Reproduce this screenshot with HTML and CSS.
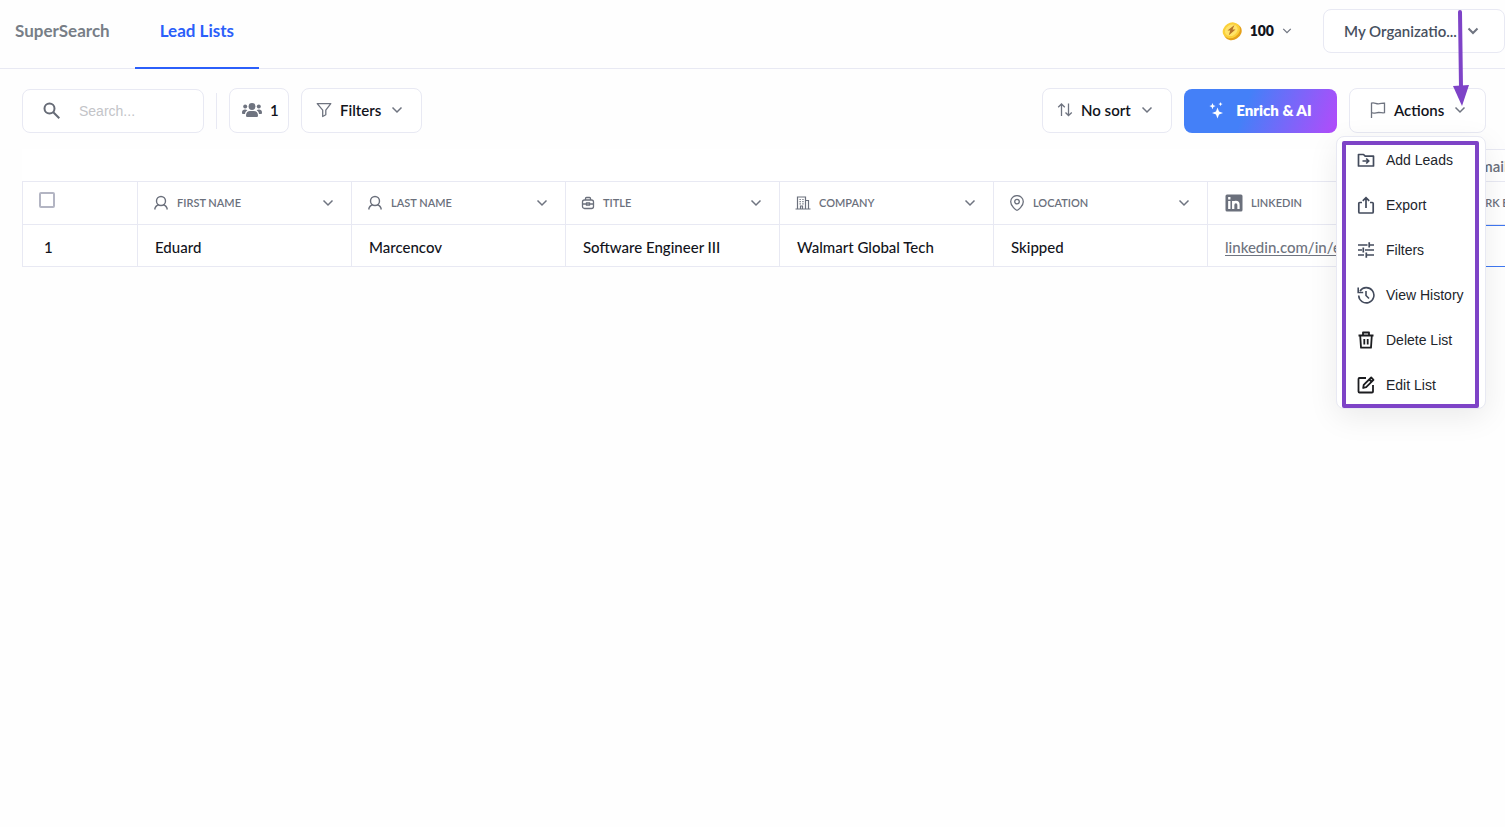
FILE: index.html
```html
<!DOCTYPE html>
<html lang="en">
<head>
  <meta charset="UTF-8">
  <meta name="viewport" content="width=device-width, initial-scale=1">
  <title>Lead Lists</title>
  <link rel="stylesheet" href="styles.css">
</head>
<body>

<!-- Shared icons -->
<svg class="sprite" aria-hidden="true">
  <symbol id="chevron" viewBox="0 0 12 12"><path d="M1.500 3.500 6 8l4.500-4.500" fill="none" stroke="currentColor"/></symbol>
  <symbol id="person" viewBox="0 0 16 16"><g fill="none" stroke="currentColor" stroke-width="1.400"><circle cx="8" cy="6" r="4.500"/><path d="M1.700 14.500c.5-2.700 2-4.200 4-4.700M14.300 14.500c-.5-2.700-2-4.200-4-4.700"/></g></symbol>
</svg>

<header class="topbar">
  <nav class="tabs">
    <a class="tab" href="#">SuperSearch</a>
    <a class="tab active" href="#">Lead Lists</a>
  </nav>
  <div class="account">
    <button class="credits" type="button">
      <svg class="coin" viewBox="0 0 20 20">
        <ellipse cx="10.800" cy="11" rx="9.300" ry="7.800" transform="rotate(-32 10.800 11)" fill="#e5a11b"/>
        <ellipse cx="9.300" cy="9.300" rx="9" ry="7.500" transform="rotate(-32 9.300 9.300)" fill="#fbd03a"/>
        <ellipse cx="9.300" cy="9.300" rx="6.700" ry="5.400" transform="rotate(-32 9.300 9.300)" fill="#ffe36b"/>
        <path d="M12.500 4 5.500 9.500h2.700L6.800 14.300l6.700-5.800h-3z" fill="#b5722a"/>
      </svg>
      <span>100</span>
      <svg class="chevron"><use href="#chevron"/></svg>
    </button>
    <button class="org" type="button">
      <span>My Organizatio...</span>
      <svg class="chevron bold"><use href="#chevron"/></svg>
    </button>
  </div>
</header>

<main>
  <div class="toolbar">
    <label class="search">
      <svg viewBox="0 0 18 18"><g fill="none" stroke="currentColor" stroke-width="2"><circle cx="6.500" cy="6.500" r="5"/><path d="m10.300 10.300 6 6"/></g></svg>
      <input type="text" placeholder="Search..." aria-label="Search">
    </label>
    <span class="divider"></span>
    <button class="btn people" type="button">
      <svg viewBox="0 0 20 16" fill="currentColor"><circle cx="10" cy="4.500" r="3.400"/><circle cx="3.200" cy="4.500" r="2"/><circle cx="16.800" cy="4.500" r="2"/><path d="M4 13.200C4 10.500 6 9 8 9h4c2 0 4 1.500 4 4.200 0 1.300-.5 1.800-1.500 1.800h-9C4.500 15 4 14.500 4 13.200zM0 10.500C0 8.500 1.300 7.600 3 7.600c1 0 1.800.3 2.400.7C4 9.200 3.200 10.400 3 12H1.200C.4 12 0 11.500 0 10.500zM20 10.500c0-2-1.300-2.900-3-2.900-1 0-1.800.3-2.400.7 1.400.9 2.200 2.100 2.400 3.700h1.800c.8 0 1.200-.5 1.200-1.500z"/></svg>
      <span>1</span>
    </button>
    <button class="btn filters" type="button">
      <svg viewBox="0 0 16 16"><path d="M1.200 1.700h13.600L9.800 8.200v4.600L6.700 14.500V8.200z" fill="none" stroke="currentColor" stroke-width="1.300" stroke-linejoin="round"/></svg>
      <span>Filters</span>
      <svg class="chevron"><use href="#chevron"/></svg>
    </button>

    <div class="right">
      <button class="btn sort" type="button">
        <svg viewBox="0 0 16 16"><path d="M4.500 14V2M1.200 5.300 4.500 2l3.300 3.300M11.500 1.500v12M8.500 10.500l3 3 3.300-3" fill="none" stroke="currentColor" stroke-width="1.300"/></svg>
        <span>No sort</span>
        <svg class="chevron"><use href="#chevron"/></svg>
      </button>
      <button class="btn enrich" type="button">
        <svg viewBox="0 0 16 18" fill="currentColor"><path d="M8.500 6.500 10 10.500l4 1.500-4 1.500-1.500 4-1.500-4L3 12l4-1.500zM3.500 2l.9 2.200 2.200.9-2.200.9-.9 2.200L2.600 6 .4 5.100l2.200-.9zM11.500 1l.6 1.500 1.500.6-1.500.6-.6 1.500-.6-1.500-1.500-.6 1.500-.6z"/></svg>
        <span>Enrich &amp; AI</span>
      </button>

      <div class="actions">
        <button class="btn actions-btn" type="button">
          <svg viewBox="0 0 16 16"><path d="M1.500 16V1.200c2.500-1.200 4.500.8 7 .6 2.200 0 4-.8 6-.6v9.500c-2 .5-3.800-.3-6-.2-2.500.1-4.500 1.200-7 .2" fill="none" stroke="currentColor" stroke-width="1.300"/></svg>
          <span>Actions</span>
          <svg class="chevron"><use href="#chevron"/></svg>
        </button>

        <div class="menu">
          <div class="menu-frame">
            <button class="item" type="button">
              <svg viewBox="0 0 18 18"><g fill="none" stroke="currentColor" stroke-width="1.700"><path d="M1.500 3.500h5l1.700 1.700h8.300v9.800h-15z" stroke-linejoin="round"/><path d="M5.500 10h6M9.200 7.500l2.500 2.500-2.500 2.500"/></g></svg>
              Add Leads
            </button>
            <button class="item" type="button">
              <svg viewBox="0 0 18 18"><path d="M5 6.500H2.800c-.7 0-1 .4-1 1V16c0 .6.400 1 1 1h12.400c.6 0 1-.4 1-1V7.500c0-.6-.3-1-1-1H13M9 12V2M5.800 4.800 9 1.700l3.200 3.100" fill="none" stroke="currentColor" stroke-width="1.700"/></svg>
              Export
            </button>
            <button class="item" type="button">
              <svg viewBox="0 0 18 18"><path d="M1 4h9.500M13 4h4M12.200 1.300v5.200M1 9h4M8 9h9M6.300 6.500v5M1 14h6M10 14h7M9.300 11.500v5.200" fill="none" stroke="currentColor" stroke-width="1.700"/></svg>
              Filters
            </button>
            <button class="item" type="button">
              <svg viewBox="0 0 18 18"><path d="M1.700 9.500A7.600 7.600 0 1 0 3 5M1.200 1.500v5h5M9 5v4.500l3 3" fill="none" stroke="currentColor" stroke-width="1.600"/></svg>
              View History
            </button>
            <button class="item dark" type="button">
              <svg viewBox="0 0 18 18"><path d="M1.500 4.500h15M6 4.500v-3h6v3M3.200 4.500 4 16.600h10l.8-12.100M7.300 8v5.500M10.700 8v5.500" fill="none" stroke="currentColor" stroke-width="1.800" stroke-linejoin="round"/></svg>
              Delete List
            </button>
            <button class="item dark" type="button">
              <svg viewBox="0 0 18 18"><path d="M9 2H2.500c-.6 0-1 .4-1 1v12.500c0 .6.400 1 1 1H15c.6 0 1-.4 1-1V9M6.200 12l.5-3.200 7.500-7.300 2.300 2.300L9.200 11.200zM12.300 3.500l2.300 2.300" fill="none" stroke="currentColor" stroke-width="1.800" stroke-linejoin="round"/></svg>
              Edit List
            </button>
          </div>
        </div>

        <!-- Arrow pointing at the Actions menu -->
        <svg class="arrow" viewBox="0 0 16 96"><path d="M7 2l1 76" stroke="#7e43c7" stroke-width="4" stroke-linecap="round"/><path d="M0 76l16-1-7 21z" fill="#7e43c7"/></svg>
      </div>
    </div>
  </div>

  <div class="table-wrap">
    <table>
      <colgroup>
        <col class="col-check"><col><col><col><col><col><col><col>
      </colgroup>
      <thead>
        <tr class="groups">
          <td colspan="7"></td>
          <th>Find Email</th>
        </tr>
        <tr>
          <th><input type="checkbox" aria-label="Select all leads"></th>
          <th><div class="head"><svg><use href="#person"/></svg>FIRST NAME<svg class="chevron"><use href="#chevron"/></svg></div></th>
          <th><div class="head"><svg><use href="#person"/></svg>LAST NAME<svg class="chevron"><use href="#chevron"/></svg></div></th>
          <th><div class="head narrow"><svg viewBox="0 0 14 16"><g fill="none" stroke="currentColor" stroke-width="1.300"><rect x="1.500" y="5" width="11" height="8.500" rx="2"/><path d="M4.500 5V3.500c0-.6.4-1 1-1h3c.6 0 1 .4 1 1V5M1.500 9h4M8.500 9h4M5.500 8h3v2h-3z"/></g></svg>TITLE<svg class="chevron"><use href="#chevron"/></svg></div></th>
          <th><div class="head"><svg viewBox="0 0 16 16"><g fill="none" stroke="currentColor" stroke-width="1.200"><path d="M2.500 14V2h8v12M10.500 5.500h3V14M.5 14h15M5.500 14v-3h2v3"/><path d="M4.500 4.500h1.300M7.300 4.500h1.300M4.500 6.700h1.300M7.300 6.700h1.300M4.500 8.900h1.300M7.300 8.900h1.300"/></g></svg>COMPANY<svg class="chevron"><use href="#chevron"/></svg></div></th>
          <th><div class="head"><svg viewBox="0 0 16 16"><g fill="none" stroke="currentColor" stroke-width="1.300"><path d="M8 15.300c-1 0-6.300-4.300-6.300-8.600a6.300 6.100 0 0 1 12.600 0c0 4.300-5.300 8.600-6.300 8.600z"/><circle cx="8" cy="6.600" r="2.300"/></g></svg>LOCATION<svg class="chevron"><use href="#chevron"/></svg></div></th>
          <th><div class="head wide"><svg viewBox="0 0 18 18"><rect x=".5" y=".5" width="17" height="17" rx="1.500" fill="currentColor"/><g fill="none" stroke="#fff" stroke-width="2.300"><path d="M4.300 7v8M4.300 3v2.400M8.200 7v8M8.200 11c0-4 5.300-4 5.300 0v4"/></g></svg>LINKEDIN<svg class="chevron"><use href="#chevron"/></svg></div></th>
          <th><div class="head wide"><svg viewBox="0 0 16 16"><path d="M1 3h14v10H1zl7 6 7-6" fill="none" stroke="currentColor" stroke-width="1.300"/></svg>WORK EMAIL</div></th>
        </tr>
      </thead>
      <tbody>
        <tr>
          <td class="num">1</td>
          <td>Eduard</td>
          <td>Marcencov</td>
          <td>Software Engineer III</td>
          <td>Walmart Global Tech</td>
          <td>Skipped</td>
          <td><a href="#">linkedin.com/in/eduard</a></td>
          <td class="enriched"></td>
        </tr>
      </tbody>
    </table>
  </div>
</main>

</body>
</html>
```
FILE: styles.css
```css
* {
  box-sizing: border-box;
}

body {
  min-height: 100vh;
  margin: 0;
  background: #fefefe;
  color: #12141c;
  font-family: Lato, "Liberation Sans", sans-serif;
  font-size: 15px;
}

button, input {
  font: inherit;
  color: inherit;
}

button {
  cursor: pointer;
}

svg {
  flex: none;
  width: 16px;
  height: 16px;
}

.sprite {
  position: absolute;
  width: 0;
  height: 0;
}

.chevron {
  width: 12px;
  height: 12px;
  color: #6f7480;
  stroke-width: 1.5px;
}

/* Top bar */
.topbar {
  display: flex;
  justify-content: space-between;
  height: 69px;
  border-bottom: 1px solid #e8e9f3;
}

.tabs {
  display: flex;
}

.tab {
  height: 69px;
  padding: 21px 25px 0;
  color: #787e87;
  font-size: 17px;
  font-weight: 700;
  line-height: 20px;
  text-decoration: none;
}

.tab:first-child {
  padding-left: 15px;
}

.tab.active {
  color: #2b5ffa;
  border-bottom: 2px solid #2b5ffa;
}

.account {
  display: flex;
  align-items: flex-start;
  gap: 31px;
  padding-top: 9px;
}

.credits {
  display: flex;
  align-items: center;
  gap: 8px;
  height: 43px;
  padding: 0;
  border: 0;
  background: none;
  font-size: 14px;
  font-weight: 800;
}

.credits .chevron {
  width: 10px;
}

.coin {
  width: 20px;
  height: 20px;
}

.org {
  display: flex;
  align-items: center;
  justify-content: space-between;
  width: 182px;
  height: 44px;
  padding: 0 25px 0 20px;
  border: 1px solid #e8e9f3;
  border-radius: 8px;
  background: #fff;
  color: #475060;
  font-weight: 600;
}

.chevron.bold {
  stroke-width: 2px;
}

/* Toolbar */
.toolbar {
  display: flex;
  align-items: flex-end;
  gap: 12px;
  padding: 19px 19px 0 22px;
}

.btn, .search {
  display: flex;
  align-items: center;
  height: 45px;
  border: 1px solid #e8e9f3;
  border-radius: 8px;
  background: #fff;
}

.btn {
  gap: 8px;
  padding: 0 14px 2px;
  font-weight: 600;
}

.btn svg {
  color: #6f7480;
}

.btn .chevron {
  margin-left: 2px;
}

.search {
  width: 182px;
  height: 44px;
  padding-left: 20px;
  gap: 18px;
  color: #666b76;
}

.search svg {
  width: 18px;
  height: 18px;
}

.search input {
  width: 100px;
  padding: 0;
  border: 0;
  outline: 0;
  background: none;
  font: 14px "Liberation Sans", Arial, sans-serif;
}

.search input::placeholder {
  color: #c3c4c8;
}

.divider {
  align-self: center;
  width: 1px;
  height: 36px;
  background: #e8e9f3;
}

.people {
  width: 60px;
  padding: 0 12px 2px;
}

.people svg {
  width: 20px;
}

.filters {
  width: 121px;
}

.right {
  display: flex;
  align-items: flex-end;
  gap: 12px;
  margin-left: auto;
}

.sort {
  width: 130px;
}

.enrich {
  width: 153px;
  height: 44px;
  justify-content: center;
  gap: 11px;
  border: 0;
  background: linear-gradient(110deg, #4480f8 40%, #b34bfa);
  color: #fff;
  font-weight: 800;
}

.enrich svg {
  height: 18px;
  color: #fff;
}

.actions {
  position: relative;
}

.actions-btn {
  width: 137px;
  padding: 0 20px 2px;
}

/* Actions menu */
.menu {
  position: absolute;
  z-index: 2;
  top: 48px;
  right: 0;
  width: 150px;
  padding: 4px 6px 0 5px;
  border: 1px solid #e8e9f3;
  border-radius: 8px;
  background: #fff;
  box-shadow: 0 8px 30px rgba(0, 0, 0, 0.08);
}

.menu-frame {
  height: 267px;
  border: 4px solid #7e43c7;
  border-radius: 2px;
}

.item {
  display: flex;
  align-items: center;
  gap: 11px;
  width: 100%;
  height: 45px;
  padding: 0 0 15px 11px;
  border: 0;
  background: none;
  color: #22252b;
  font: 14px/30px "Liberation Sans", Arial, sans-serif;
  white-space: nowrap;
}

.item svg {
  width: 18px;
  height: 18px;
  color: #434b5c;
}

.item.dark svg {
  color: #1c1d20;
}

.arrow {
  position: absolute;
  z-index: 3;
  top: -78px;
  right: 17px;
  width: 16px;
  height: 96px;
}

/* Leads table */
.table-wrap {
  padding: 16px 0 0 22px;
  overflow: hidden;
}

table {
  width: 1614px;
  table-layout: fixed;
  border-collapse: separate;
  border-spacing: 0;
}

.col-check {
  width: 116px;
}

th, td {
  padding: 0 17px;
  border-right: 1px solid #e8e9f3;
  border-bottom: 1px solid #e8e9f3;
  background: #fff;
  text-align: left;
  white-space: nowrap;
}

th {
  height: 43px;
  padding-left: 15px;
  color: #6b707c;
  font-size: 11px;
  font-weight: 600;
}

tr:not(.groups) > :first-child {
  border-left: 1px solid #e8e9f3;
}

tbody td {
  height: 42px;
  padding-top: 2px;
  font-weight: 500;
}

td a {
  color: #6f7480;
  text-underline-offset: 2px;
}

.groups th {
  height: 33px;
  padding-left: 17px;
  border-top: 1px solid #e8e9f3;
  font-size: 15px;
}

.groups td {
  border-right: 0;
}

th input {
  appearance: none;
  display: block;
  width: 16px;
  height: 16px;
  margin: 0 0 6px 1px;
  border: 2px solid #b3b5c3;
  border-radius: 2px;
}

.head {
  display: flex;
  align-items: center;
  gap: 8px;
  padding-bottom: 1px;
}

.head .chevron {
  margin-left: auto;
}

.head.narrow svg:first-child {
  width: 14px;
}

.head.wide {
  padding-left: 2px;
}

.head.wide svg:first-child {
  width: 18px;
  height: 18px;
}

tbody .num {
  padding-left: 21px;
}

.enriched {
  border-bottom-color: #3f78f2;
  box-shadow: inset 0 1px #3f78f2;
}
```
